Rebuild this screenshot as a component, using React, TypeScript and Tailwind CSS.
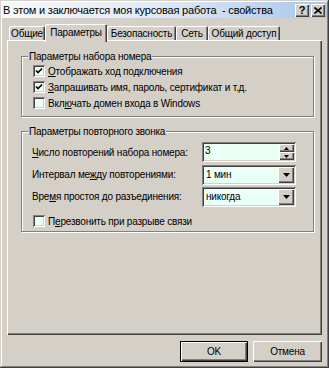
import React from 'react'

const sunken =
  'shadow-[inset_1px_1px_#808080,inset_-1px_-1px_#ffffff,inset_2px_2px_#404040,inset_-2px_-2px_#d4d0c8]'
const raised =
  'shadow-[inset_1px_1px_#ffffff,inset_-1px_-1px_#404040,inset_-2px_-2px_#808080]'

const Check = ({ checked }: { checked?: boolean }) => (
  <span className={`flex h-[12px] w-[12px] shrink-0 items-center justify-center bg-[#eafff6] ${sunken}`}>
    {checked && (
      <svg width="8" height="8" viewBox="0 0 8 8">
        <path d="M1 3.5 L3 5.5 L7 1.5" fill="none" stroke="#000" strokeWidth="1.6" />
      </svg>
    )}
  </span>
)

const CheckRow = ({ checked, children }: { checked?: boolean; children: React.ReactNode }) => (
  <div className="flex h-[16px] items-center gap-[3px]">
    <Check checked={checked} />
    <span>{children}</span>
  </div>
)

const Group = ({ title, className, children }: { title: string; className: string; children: React.ReactNode }) => (
  <div
    className={`relative w-[293px] border border-[#808080] shadow-[inset_1px_1px_#ffffff,1px_1px_#ffffff] ${className}`}
  >
    <span className="absolute -top-[7px] left-[6px] bg-[#d4d0c8] px-[1px] leading-[13px]">{title}</span>
    {children}
  </div>
)

const Arrow = () => (
  <svg width="7" height="4" viewBox="0 0 7 4">
    <path d="M0 0 L7 0 L3.5 4 Z" fill="#000" />
  </svg>
)

const Select = ({ value }: { value: string }) => (
  <div className={`flex h-[20px] w-[94px] items-center bg-[#eafff6] p-[2px] ${sunken}`}>
    <span className="flex-1 pl-[2px]">{value}</span>
    <span className={`flex h-[16px] w-[16px] items-center justify-center bg-[#d4d0c8] ${raised}`}>
      <Arrow />
    </span>
  </div>
)

const Tab = ({ label, w, active }: { label: string; w: string; active?: boolean }) => (
  <div
    className={`flex items-start justify-center rounded-t-[2px] bg-[#d4d0c8] shadow-[inset_1px_1px_#ffffff,inset_-1px_0_#404040,inset_-2px_0_#808080] ${w} ${
      active ? 'relative z-10 -mb-[2px] h-[18px] pt-[2px]' : 'h-[14px] pt-[1px]'
    }`}
  >
    {label}
  </div>
)

export default function App() {
  return (
    <div
      className={`flex h-[368px] w-[329px] flex-col whitespace-nowrap bg-[#d4d0c8] p-[2px] font-['Liberation_Sans',Arial,sans-serif] text-[10px] leading-[13px] tracking-[-0.2px] text-black shadow-[inset_-1px_-1px_#404040,inset_1px_1px_#d4d0c8,inset_-2px_-2px_#808080,inset_2px_2px_#ffffff]`}
    >
      {/* title bar */}
      <div className="flex h-[16px] items-center bg-linear-to-r from-[#f6f8fb] via-[#dfe9f5] to-[#a8c6ea] pl-[1px] pr-[2px]">
        <span className="flex-1 text-[11px]">В этом и заключается моя курсовая работа&nbsp; - свойства</span>
        <span className={`flex h-[13px] w-[14px] items-center justify-center bg-[#d4d0c8] text-[11px] font-bold ${raised}`}>
          ?
        </span>
        <span className={`ml-[2px] flex h-[13px] w-[14px] items-center justify-center bg-[#d4d0c8] ${raised}`}>
          <svg width="8" height="7" viewBox="0 0 8 7">
            <path d="M0.5 0.5 L7.5 6.5 M7.5 0.5 L0.5 6.5" stroke="#000" strokeWidth="1.6" />
          </svg>
        </span>
      </div>

      {/* tabs */}
      <div className="ml-[5px] mt-[6px] flex h-[16px] items-end pl-[2px]">
        <Tab label="Общие" w="w-[36px]" />
        <Tab label="Параметры" w="w-[62px]" active />
        <Tab label="Безопасность" w="w-[69px]" />
        <Tab label="Сеть" w="w-[32px]" />
        <Tab label="Общий доступ" w="w-[72px]" />
      </div>

      {/* panel */}
      <div
        className={`ml-[5px] flex h-[295px] w-[315px] flex-col pl-[14px] pt-[16px] shadow-[inset_1px_1px_#ffffff,inset_-1px_-1px_#404040,inset_-2px_-2px_#808080]`}
      >
        <Group title="Параметры набора номера" className="h-[61px] pl-[11px] pt-[6px]">
          <CheckRow checked>
            <span className="underline">О</span>тображать ход подключения
          </CheckRow>
          <CheckRow checked>
            <span className="underline">З</span>апрашивать имя, пароль, сертификат и т.д.
          </CheckRow>
          <CheckRow>
            Вкл<span className="underline">ю</span>чать домен входа в Windows
          </CheckRow>
        </Group>

        <Group title="Параметры повторного звонка" className="mt-[14px] h-[101px] pl-[10px] pt-[10px]">
          <div className="grid grid-cols-[170px_94px] gap-y-[1px]">
            <div className="flex h-[21px] items-center">
              <span>
                <span className="underline">Ч</span>исло повторений набора номера:
              </span>
            </div>
            <div className={`flex h-[20px] items-stretch bg-[#eafff6] p-[2px] ${sunken}`}>
              <span className="flex-1 pl-[1px] leading-[14px]">3</span>
              <div className="flex w-[15px] flex-col">
                <span className={`flex flex-1 items-center justify-center bg-[#d4d0c8] ${raised}`}>
                  <svg width="5" height="3" viewBox="0 0 5 3">
                    <path d="M2.5 0 L5 3 L0 3 Z" fill="#000" />
                  </svg>
                </span>
                <span className={`flex flex-1 items-center justify-center bg-[#d4d0c8] ${raised}`}>
                  <svg width="5" height="3" viewBox="0 0 5 3">
                    <path d="M0 0 L5 0 L2.5 3 Z" fill="#000" />
                  </svg>
                </span>
              </div>
            </div>

            <div className="flex h-[21px] items-center">
              <span>
                Интервал ме<span className="underline">ж</span>ду повторениями:
              </span>
            </div>
            <div className="flex items-center">
              <Select value="1 мин" />
            </div>

            <div className="flex h-[21px] items-center">
              <span>
                Вре<span className="underline">м</span>я простоя до разъединения:
              </span>
            </div>
            <div className="flex items-center">
              <Select value="никогда" />
            </div>
          </div>
          <div className="mt-[6px] pl-[1px]">
            <CheckRow>
              П<span className="underline">е</span>резвонить при разрыве связи
            </CheckRow>
          </div>
        </Group>
      </div>

      {/* buttons */}
      <div className="mt-[6px] flex justify-end gap-[5px] pr-[5px]">
        <button className="h-[21px] w-[68px] border border-black bg-[#d4d0c8] p-0 shadow-[inset_1px_1px_#ffffff,inset_-1px_-1px_#404040,inset_-2px_-2px_#808080]">
          OK
        </button>
        <button className={`h-[21px] w-[69px] bg-[#d4d0c8] ${raised}`}>Отмена</button>
      </div>
    </div>
  )
}
